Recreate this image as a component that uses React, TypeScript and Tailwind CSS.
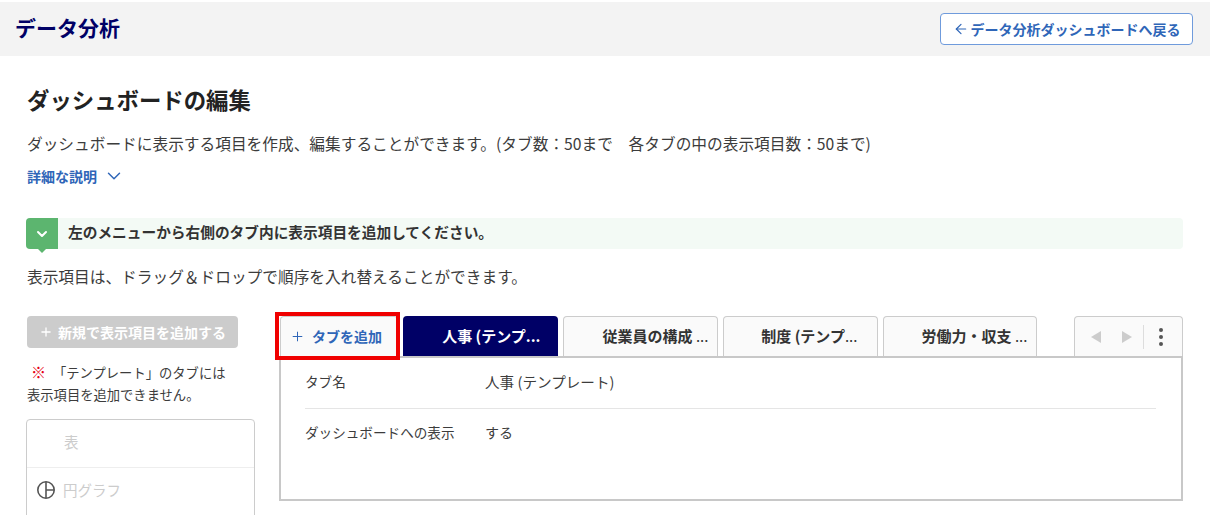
import { ArrowLeft, ChevronDown, Plus } from "lucide-react";

const font = "font-['Noto_Sans_CJK_JP','Liberation_Sans',sans-serif]";

const tabs = [
  { label: "人事 (テンプ", pad: "pr-[18px]", active: true, width: "w-[155px]" },
  { label: "従業員の構成 ", pad: "pr-[9px]", active: false, width: "w-[155px]" },
  { label: "制度 (テンプ", pad: "pr-[20px]", active: false, width: "w-[155px]" },
  { label: "労働力・収支 ", pad: "pr-[9px]", active: false, width: "w-[154px]" },
];

function PieIcon() {
  return (
    <svg width="20" height="20" viewBox="0 0 20 20" fill="none" stroke="#555" strokeWidth="1.6">
      <circle cx="10" cy="10" r="8.2" />
      <path d="M10 2v16M10 10h8" />
    </svg>
  );
}

function TabStrip() {
  return (
    <div className="flex h-[40px] items-stretch">
      <div className="relative ml-[1px] flex w-[119px] items-center rounded-t-[4px] border border-b-0 border-[#cccccc] bg-[#fafafa] pl-[9px] text-[14px] font-bold text-[#2f66b8]">
        <Plus className="mr-[7px] h-[15px] w-[15px]" strokeWidth={1.6} />
        <span>タブを追加</span>
        <div className="absolute left-[-6px] top-[-5px] h-[48px] w-[125px] border-[4px] border-[#f00000]" />
      </div>
      <div className="ml-[5px] flex gap-[5px]">
        {tabs.map((tab) => (
          <div
            key={tab.label}
            className={
              tab.active
                ? `${tab.width} ${tab.pad} flex items-center justify-end whitespace-pre rounded-t-[4px] bg-[#000066] text-[15px] font-bold text-white`
                : `${tab.width} ${tab.pad} flex items-center justify-end whitespace-pre rounded-t-[4px] border border-b-0 border-[#cccccc] bg-[#fafafa] text-[15px] font-bold text-[#333333]`
            }
          >
            {tab.label}
            <span className={tab.active ? "font-bold" : "font-normal"}>...</span>
          </div>
        ))}
      </div>
      <div className="ml-[37px] flex w-[109px] items-center rounded-t-[4px] border border-b-0 border-[#cccccc] bg-[#fafafa] pl-[16px]">
        <span className="h-0 w-0 border-y-[6px] border-r-[10px] border-y-transparent border-r-[#cccccc]" />
        <span className="ml-[21px] h-0 w-0 border-y-[6px] border-l-[10px] border-y-transparent border-l-[#cccccc]" />
        <span className="ml-[11px] h-[24px] w-px bg-[#dddddd]" />
        <span className="ml-[15px] flex flex-col gap-[3px]">
          <span className="h-[4px] w-[4px] rounded-full bg-[#555555]" />
          <span className="h-[4px] w-[4px] rounded-full bg-[#555555]" />
          <span className="h-[4px] w-[4px] rounded-full bg-[#555555]" />
        </span>
      </div>
    </div>
  );
}

export default function App() {
  return (
    <div className={`${font} h-[515px] w-[1210px] overflow-hidden bg-white pt-[2px] text-[#3c3c3c]`}>
      <header className="flex h-[54px] items-center justify-between bg-[#f3f3f3] pl-[15px] pr-[17px]">
        <h1 className="pb-[2px] text-[21px] font-bold text-[#000066]">データ分析</h1>
        <button className="flex h-[32px] w-[253px] items-center justify-center rounded-[4px] border border-[#6f9bdc] bg-white text-[14px] font-bold text-[#2f66b8]">
          <ArrowLeft className="mr-[2px] h-[16px] w-[16px]" strokeWidth={1.8} />
          データ分析ダッシュボードへ戻る
        </button>
      </header>

      <main className="pl-[26px] pr-[27px]">
        <h2 className="mt-[26px] pl-[1px] text-[22.4px] font-bold leading-[34px] text-[#222222]">ダッシュボードの編集</h2>
        <p className="mt-[16px] pl-[1px] text-[15.7px] leading-[24px]">
          ダッシュボードに表示する項目を作成、編集することができます。(タブ数：50まで　各タブの中の表示項目数：50まで)
        </p>
        <div className="mt-[8px] flex h-[24px] items-center pl-[1px] text-[14px] font-bold text-[#2f66b8]">
          詳細な説明
          <ChevronDown className="ml-[6px] h-[22px] w-[22px]" strokeWidth={1.6} />
        </div>

        <div className="mt-[30px] flex h-[31px] items-center rounded-[4px] bg-[#f3faf5]">
          <div className="relative flex h-[31px] w-[32px] items-center justify-center rounded-l-[4px] bg-[#5cb56f] text-white">
            <ChevronDown className="h-[16px] w-[16px]" strokeWidth={3} />
            <span className="absolute bottom-[-4px] left-[12px] h-0 w-0 border-x-[4px] border-t-[4px] border-x-transparent border-t-[#5cb56f]" />
          </div>
          <p className="ml-[10px] pb-[3px] text-[14.7px] font-bold text-[#333333]">左のメニューから右側のタブ内に表示項目を追加してください。</p>
        </div>
        <p className="mt-[16px] pl-[1px] text-[15.7px] leading-[24px]">表示項目は、ドラッグ＆ドロップで順序を入れ替えることができます。</p>

        <div className="mt-[27px] flex">
          <aside className="w-[229px]">
            <button className="ml-[1px] flex h-[32px] w-[211px] items-center justify-center rounded-[4px] bg-[#cccccc] text-[14px] font-bold text-white">
              <Plus className="mr-[5px] h-[14px] w-[14px]" strokeWidth={2.2} />
              新規で表示項目を追加する
            </button>
            <p className="mt-[14px] h-[22px] pl-[5px] text-[13.3px] leading-[22px]">
              <span className="mr-[7px] text-[15px] font-bold leading-none text-[#e60012]">※</span>
              「テンプレート」のタブには
            </p>
            <p className="pl-[1px] text-[13.3px] leading-[22px]">表示項目を追加できません。</p>
            <div className="mt-[13px] rounded-t-[4px] border border-[#cccccc]">
              <div className="flex h-[47px] items-center pb-[3px] pl-[37px] text-[14.5px] text-[#cccccc]">表</div>
              <div className="flex h-[56px] items-start gap-[7px] border-t border-[#eeeeee] pl-[9px] pt-[12px] text-[14.5px] leading-[20px] text-[#cccccc]">
                <PieIcon />
                円グラフ
              </div>
            </div>
          </aside>

          <section className="ml-[24px] w-[904px]">
            <TabStrip />
            <div className="h-[145px] border-2 border-[#c8c8c8] bg-white pl-[24px] pr-[25px] text-[13.6px]">
              <div className="flex h-[51px] items-center border-b border-[#e5e5e5] pb-[3px]">
                <span className="w-[180px]">タブ名</span>
                <span className="text-[14.6px]">人事 (テンプレート)</span>
              </div>
              <div className="flex h-[50px] items-center pb-[4px]">
                <span className="w-[180px]">ダッシュボードへの表示</span>
                <span className="text-[14px]">する</span>
              </div>
            </div>
          </section>
        </div>
      </main>
    </div>
  );
}
